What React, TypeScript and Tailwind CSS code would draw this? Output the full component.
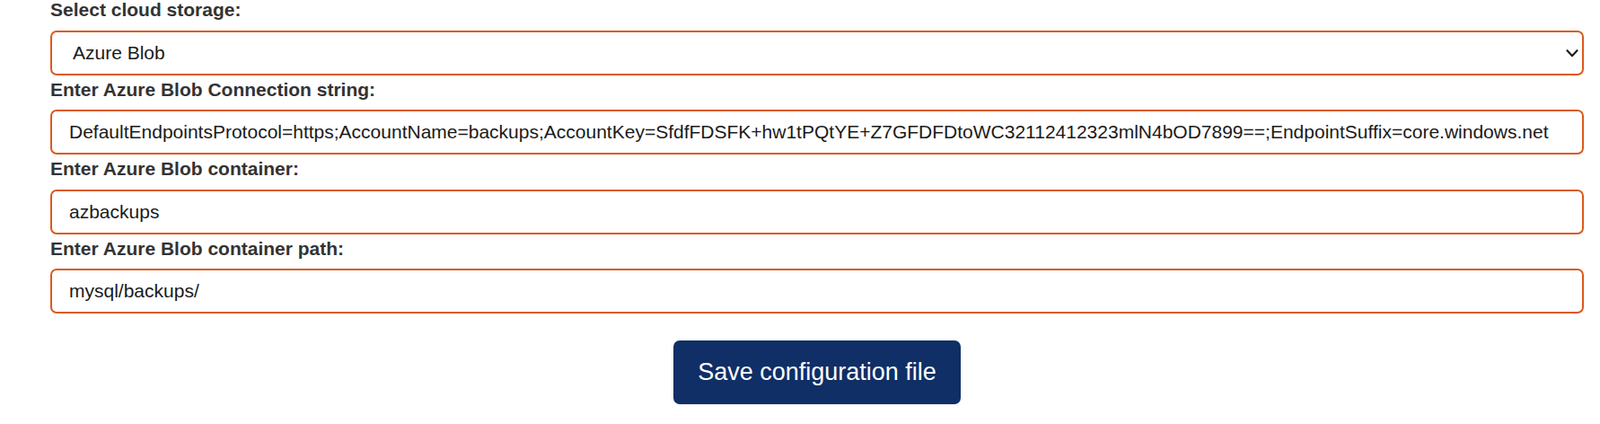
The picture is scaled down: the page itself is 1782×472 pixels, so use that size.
import { useState } from 'react'

const font = { fontFamily: '"Liberation Sans", Arial, sans-serif' }

function Field({ label, value, onChange }: { label: string; value: string; onChange: (v: string) => void }) {
  return (
    <div className="mb-[5px]">
      <label className="block text-[21px] leading-[21px] font-bold text-[#333333] mb-[12.5px]">{label}</label>
      <input
        value={value}
        onChange={e => onChange(e.target.value)}
        className="block w-full h-[50px] border-2 border-[#dc5a1e] rounded-[7px] pl-[19px] pr-3 text-[21px] text-[#1a1a1a] bg-white focus:outline-none"
      />
    </div>
  )
}

export default function App() {
  const [storage, setStorage] = useState('azure')
  const [conn, setConn] = useState(
    'DefaultEndpointsProtocol=https;AccountName=backups;AccountKey=SfdfFDSFK+hw1tPQtYE+Z7GFDFDtoWC32112412323mlN4bOD7899==;EndpointSuffix=core.windows.net'
  )
  const [container, setContainer] = useState('azbackups')
  const [path, setPath] = useState('mysql/backups/')

  return (
    <div className="w-[1782px] h-[472px] bg-white overflow-hidden" style={font}>
      <form className="ml-[56px] mr-[18px]" onSubmit={e => e.preventDefault()}>
        <div className="mb-[5px]">
          <label className="block text-[21px] leading-[21px] font-bold text-[#333333] mb-[12.5px]">Select cloud storage:</label>
          <div className="relative">
            <select
              value={storage}
              onChange={e => setStorage(e.target.value)}
              className="block w-full h-[50px] appearance-none border-2 border-[#dc5a1e] rounded-[7px] pl-[23px] pr-10 text-[21px] text-[#1a1a1a] bg-white focus:outline-none"
            >
              <option value="azure">Azure Blob</option>
              <option value="s3">Amazon S3</option>
              <option value="gcs">Google Cloud Storage</option>
            </select>
            <svg className="absolute right-[6px] top-[21px] pointer-events-none" width="14" height="9" viewBox="0 0 14 9" fill="none">
              <path d="M1.5 1.2 L7 7.2 L12.5 1.2" stroke="#222" strokeWidth="2.2" strokeLinecap="round" strokeLinejoin="round" />
            </svg>
          </div>
        </div>
        <Field label="Enter Azure Blob Connection string:" value={conn} onChange={setConn} />
        <Field label="Enter Azure Blob container:" value={container} onChange={setContainer} />
        <Field label="Enter Azure Blob container path:" value={path} onChange={setPath} />
        <div className="flex justify-center mt-[30px]">
          <button
            type="submit"
            className="w-[320px] h-[71px] rounded-[7px] bg-[#0f2f66] text-white text-[27px]"
          >
            Save configuration file
          </button>
        </div>
      </form>
    </div>
  )
}
